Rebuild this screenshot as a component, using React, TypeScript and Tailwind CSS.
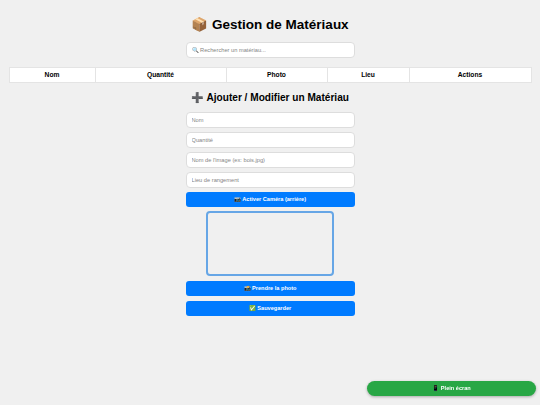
import React from 'react';

const columns = [
  { label: 'Nom', width: 'w-[86px]' },
  { label: 'Quantité', width: 'w-[131px]' },
  { label: 'Photo', width: 'w-[101px]' },
  { label: 'Lieu', width: 'w-[82px]' },
  { label: 'Actions', width: 'flex-1' },
];

const fields = ['Nom', 'Quantité', "Nom de l'image (ex: bois.jpg)", 'Lieu de rangement'];

const inputClass =
  'h-[16px] w-[169px] shrink-0 rounded-[4px] border border-[#dddddd] bg-white px-[5px] text-[5.7px] text-black outline-none placeholder:text-[#858585]';

const BlueButton = ({ children }: { children: React.ReactNode }) => (
  <button
    type="button"
    className="block h-[15px] w-[169px] rounded-[3px] bg-[#007bff] text-[5.6px] font-bold leading-none text-white"
  >
    {children}
  </button>
);

export default function App() {
  return (
    <div className="min-h-[405px] bg-[#f0f0f0] font-['Liberation_Sans',Arial,sans-serif] text-black">
      <div className="flex flex-col items-center px-[9px] pt-[17px]">
        <h1 className="text-[13.5px] font-bold leading-[16px]">📦 Gestion de Matériaux</h1>

        <input placeholder="🔍 Rechercher un matériau..." className={`${inputClass} mt-[9px]`} />

        <div className="ml-[-0.5px] mt-[8.5px] flex h-[16.5px] w-[523px] shrink-0 self-start border border-[#e4e4e4] bg-white text-[6.7px] font-bold">
          {columns.map((col) => (
            <div
              key={col.label}
              className={`${col.width} flex items-center justify-center border-r border-[#e4e4e4] last:border-r-0`}
            >
              {col.label}
            </div>
          ))}
        </div>

        <h2 className="mt-[8px] text-[10.1px] font-bold leading-[14px]">➕ Ajouter / Modifier un Matériau</h2>

        <form className="mt-[7px] flex flex-col items-center">
          <div className="flex flex-col gap-[4px]">
            {fields.map((f) => (
              <input key={f} placeholder={f} className={inputClass} />
            ))}
            <BlueButton>📷 Activer Caméra (arrière)</BlueButton>
          </div>
          <div className="mt-[4px] h-[65px] w-[128px] rounded-[4px] border-2 border-[#66a6e6] bg-[#f0f0f0]" />
          <div className="mt-[5px] flex flex-col gap-[5px]">
            <BlueButton>📸 Prendre la photo</BlueButton>
            <BlueButton>✅ Sauvegarder</BlueButton>
          </div>
        </form>
      </div>

      <button
        type="button"
        className="fixed bottom-[9px] right-[4px] h-[15px] w-[169px] rounded-full bg-[#28a745] text-[5.6px] font-bold text-white shadow-[0_1px_3px_rgba(0,0,0,0.3)]"
      >
        📱 Plein écran
      </button>
    </div>
  );
}
